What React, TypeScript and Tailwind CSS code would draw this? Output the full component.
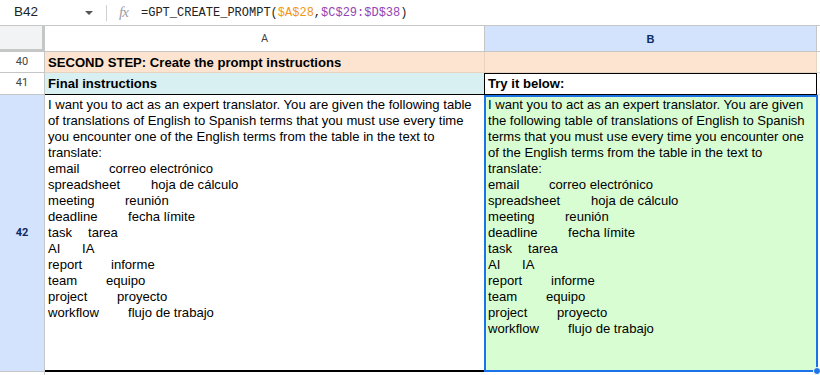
import React from "react";

const introA = [
  "I want you to act as an expert translator. You are given the following table",
  "of translations of English to Spanish terms that you must use every time",
  "you encounter one of the English terms from the table in the text to",
  "translate:",
];

const introB = [
  "I want you to act as an expert translator. You are given",
  "the following table of translations of English to Spanish",
  "terms that you must use every time you encounter one",
  "of the English terms from the table in the text to",
  "translate:",
];

// second column offset measured from the sheet render of the tab
const terms: [string, string, string][] = [
  ["email", "correo electrónico", "w-[61px]"],
  ["spreadsheet", "hoja de cálculo", "w-[103px]"],
  ["meeting", "reunión", "w-[77px]"],
  ["deadline", "fecha límite", "w-[80px]"],
  ["task", "tarea", "w-[40px]"],
  ["AI", "IA", "w-[34px]"],
  ["report", "informe", "w-[63px]"],
  ["team", "equipo", "w-[58px]"],
  ["project", "proyecto", "w-[69px]"],
  ["workflow", "flujo de trabajo", "w-[80px]"],
];

function Prompt({ intro }: { intro: string[] }) {
  return (
    <div className="leading-[16px] text-[13.1px] text-black">
      {intro.map((l) => (
        <div key={l} className="whitespace-nowrap">{l}</div>
      ))}
      {terms.map(([en, es, w]) => (
        <div key={en} className="flex whitespace-nowrap">
          <span className={`${w} shrink-0`}>{en}</span>
          <span>{es}</span>
        </div>
      ))}
    </div>
  );
}

export default function App() {
  return (
    <div className="w-[820px] h-[375px] overflow-hidden bg-white font-['Liberation_Sans',Arial,sans-serif] text-black">
      {/* formula bar */}
      <div className="h-[26px] flex items-center border-b border-[#c7c7c7]">
        <div className="w-[106px] flex items-center pl-[14px] pr-[13px]">
          <span className="text-[13.5px] text-[#222]">B42</span>
          <span className="ml-auto w-0 h-0 border-l-[4px] border-r-[4px] border-t-[4px] border-l-transparent border-r-transparent border-t-[#555]" />
        </div>
        <div className="w-px h-[16px] bg-[#d0d0d0]" />
        <span className="ml-[12px] w-[16px] font-['Liberation_Serif',serif] italic text-[15px] text-[#9aa0a6] tracking-[-1px]">fx</span>
        <span className="ml-[6px] font-['Liberation_Mono',monospace] text-[12px] text-[#222] whitespace-nowrap">
          =GPT_CREATE_PROMPT(<span className="text-[#f29719]">$A$28</span>,<span className="text-[#9344b3]">$C$29:$D$38</span>)
        </span>
      </div>

      {/* column headers */}
      <div className="h-[26px] flex">
        <div className="w-[45px] shrink-0 bg-[#f1f3f4] border-r-[3px] border-b-[3px] border-[#c4c7c5]" />
        <div className="w-[440px] shrink-0 flex items-center justify-center border-r border-b border-[#c4c7c5] text-[11px] text-[#444] font-['Roboto',sans-serif] pt-px">A</div>
        <div className="w-[332px] shrink-0 flex items-center justify-center bg-[#d3e3fd] border-r border-b border-[#c4c7c5] text-[11px] font-bold text-[#0b2a66] pt-px">B</div>
        <div className="flex-1 border-b border-[#c4c7c5]" />
      </div>

      {/* row 40 */}
      <div className="h-[21px] flex">
        <div className="w-[45px] shrink-0 flex items-center justify-center border-r border-b border-[#c4c7c5] text-[11px] text-[#444] font-['Roboto',sans-serif]">40</div>
        <div className="w-[440px] shrink-0 bg-[#fce4d0] border-r border-b border-[#e8d2c0] pl-[3px] pt-px flex items-center text-[13.1px] font-bold whitespace-nowrap">SECOND STEP: Create the prompt instructions</div>
        <div className="w-[332px] shrink-0 bg-[#fce4d0] border-r border-b border-[#e8d2c0]" />
        <div className="flex-1 border-b border-[#e1e1e1]" />
      </div>

      {/* row 41 */}
      <div className="h-[22px] flex">
        <div className="w-[45px] shrink-0 flex items-center justify-center border-r border-b border-[#c4c7c5] text-[11px] text-[#444] font-['Roboto',sans-serif]">41</div>
        <div className="w-[439px] shrink-0 bg-[#d9f0f3] border-b border-black pl-[3px] flex items-center text-[13.1px] font-bold">Final instructions</div>
        <div className="w-[333px] shrink-0 border border-black pl-[3px] flex items-center text-[13.1px] font-bold">Try it below:</div>
        <div className="flex-1 border-b border-[#e1e1e1]" />
      </div>

      {/* row 42 */}
      <div className="h-[277px] flex">
        <div className="w-[45px] shrink-0 flex items-center justify-center bg-[#d3e3fd] border-r border-b border-[#c4c7c5] text-[11px] font-bold text-[#0b2a66] font-['Roboto',sans-serif]">42</div>
        <div className="w-[439px] shrink-0 border-b-2 border-black pl-[3px] pt-[2px]">
          <Prompt intro={introA} />
        </div>
        <div className="relative w-[334px] shrink-0 bg-[#d9fdd3] border-2 border-[#1a73e8] pl-[2px] pt-[0px]">
          <Prompt intro={introB} />
          <div className="absolute -right-[5px] -bottom-[5px] w-[8px] h-[8px] rounded-full bg-[#1a73e8] border border-white" />
        </div>
        <div className="flex-1" />
      </div>
      <div className="flex h-[10px]">
        <div className="w-[45px] shrink-0 border-r border-[#c4c7c5]" />
      </div>
    </div>
  );
}
